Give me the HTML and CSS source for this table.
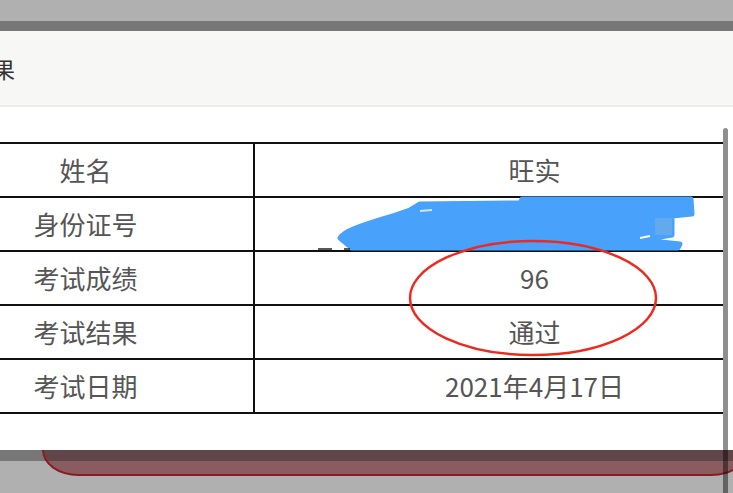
FILE: index.html
```html
<!DOCTYPE html>
<html lang="zh-CN">
<head>
<meta charset="utf-8">
<title>考试结果</title>
<link rel="stylesheet" href="styles.css">
</head>
<body>
<div class="page">
  <div class="top"></div>
  <div class="shade"></div>
  <div class="modal">
    <div class="modal-head"><h1 class="title">考试结果</h1></div>
    <div class="modal-body">
      <div class="clip">
        <table class="result">
          <tr><td class="label">姓名</td><td class="value">旺实</td></tr>
          <tr><td class="label">身份证号</td><td class="value">&nbsp;</td></tr>
          <tr><td class="label">考试成绩</td><td class="value">96</td></tr>
          <tr><td class="label">考试结果</td><td class="value">通过</td></tr>
          <tr><td class="label">考试日期</td><td class="value">2021年4月17日</td></tr>
        </table>
      </div>
    </div>
  </div>
  <div class="footer"><div class="btn"></div></div>
  <div class="scrollbar"></div>
  <svg class="marks" width="733" height="493" viewBox="0 0 733 493">
    <path d="M340,238 C346,228 380,221 410,210 L420,204 L520,203 L522,199 L691,199 L692,214 L672,216 L672,235 L642,240 L680,244 L678,248 L352,248 Z" fill="#48a1fb" stroke="#48a1fb" stroke-width="5" stroke-linejoin="round"/>
    <rect x="655" y="218" width="17" height="17" fill="#62a9ee"/>
    <path d="M420,211 L432,210" stroke="#cfe6fd" stroke-width="2"/>
    <path d="M640,238 L650,236" stroke="#ffffff" stroke-width="2"/>
    <path d="M318,249 L332,249 M344,249 L350,249" stroke="#222" stroke-width="1.5"/>
    <ellipse cx="533" cy="298" rx="123" ry="57" fill="none" stroke="#ee2a1e" stroke-width="2.5"/>
  </svg>
</div>
</body>
</html>
```

FILE: styles.css
```css
html, body {
  margin: 0;
  padding: 0;
}
body {
  width: 733px;
  height: 493px;
  overflow: hidden;
  background: #b0b0b0;
  font-family: "Noto Sans CJK SC", "Noto Sans", sans-serif;
}
.page {
  position: relative;
  width: 733px;
  height: 493px;
  display: flex;
  flex-direction: column;
}
.top {
  height: 21px;
  background: #b0b0b0;
}
.shade {
  height: 10px;
  background: #777777;
}
.modal {
  height: 419px;
  display: flex;
  flex-direction: column;
  background: #ffffff;
}
.modal-head {
  height: 74px;
  background: #f7f7f5;
  border-bottom: 2px solid #ececec;
  display: flex;
  align-items: center;
}
.title {
  margin: 0 0 0 -73px;
  font-size: 22px;
  font-weight: normal;
  color: #333333;
  line-height: 1;
}
.modal-body {
  flex: 1;
  padding-top: 35px;
  background: #ffffff;
}
.clip {
  width: 723px;
  overflow: hidden;
}
.result {
  margin-left: -84px;
  width: 900px;
  border-collapse: collapse;
  table-layout: fixed;
}
.result td {
  border: 2px solid #111111;
  height: 52px;
  padding: 0;
  text-align: center;
  vertical-align: middle;
  font-size: 26px;
  color: #555555;
  line-height: 1;
}
.result .label {
  width: 335px;
}
.footer {
  height: 43px;
  overflow: hidden;
  background: linear-gradient(#777777 0 11px, #b0b0b0 11px);
  padding-left: 42px;
}
.btn {
  width: 702px;
  height: 24px;
  background: linear-gradient(#604549 0 11px, #8a5c60 11px);
  border: 2px solid #8b1a24;
  border-top: none;
  border-radius: 0 0 42px 42px / 0 0 30px 30px;
}
.scrollbar {
  position: absolute;
  left: 723px;
  top: 128px;
  width: 5px;
  height: 365px;
  border-radius: 3px 3px 0 0;
  background: rgba(0, 0, 0, 0.44);
}
.marks {
  position: absolute;
  left: 0;
  top: 0;
  pointer-events: none;
}
```
